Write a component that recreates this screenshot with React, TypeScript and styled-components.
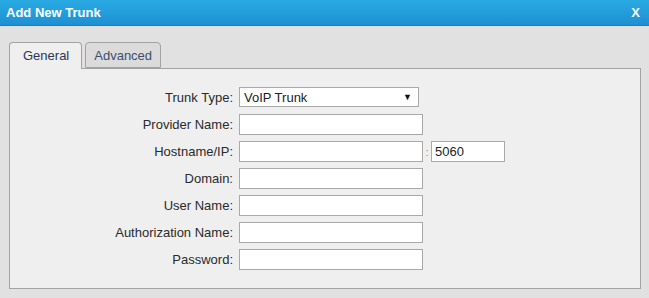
import React from 'react';
import styled, { createGlobalStyle } from 'styled-components';

const GlobalStyle = createGlobalStyle`
  html, body {
    margin: 0;
    padding: 0;
    background: #e1e1e1;
    font-family: Arial, 'Liberation Sans', sans-serif;
  }
`;

const Dialog = styled.div`
  width: 649px;
  height: 298px;
  background: #e1e1e1;
  display: flex;
  flex-direction: column;
  overflow: hidden;
`;

const TitleBar = styled.div`
  height: 25px;
  flex: 0 0 auto;
  display: flex;
  align-items: center;
  justify-content: space-between;
  padding: 0 9px 0 6px;
  background: linear-gradient(#2aaae3, #1d90d3);
  border-bottom: 1px solid #1b7fbd;
  color: #fff;
  font-weight: bold;
  font-size: 13px;
`;

const Close = styled.span`
  font-size: 13px;
  font-weight: bold;
  cursor: pointer;
`;

const Body = styled.div`
  padding: 16px 8px 9px 9px;
  display: flex;
  flex-direction: column;
`;

const TabList = styled.div`
  display: flex;
  gap: 3px;
  height: 26px;
  position: relative;
  z-index: 1;
`;

const Tab = styled.div<{ $active?: boolean }>`
  box-sizing: border-box;
  height: ${(p) => (p.$active ? '27px' : '26px')};
  padding: ${(p) => (p.$active ? '0 12px 1px 13px' : '0 8px 0 8px')};
  display: flex;
  align-items: center;
  font-size: 13px;
  border: 1px solid #a3a3a3;
  border-bottom: ${(p) => (p.$active ? 'none' : '1px solid #a3a3a3')};
  border-radius: 4px 4px 0 0;
  background: ${(p) => (p.$active ? '#efefef' : '#dbdbdb')};
  color: ${(p) => (p.$active ? '#2b3658' : '#3e4c6e')};
`;

const Panel = styled.div`
  box-sizing: border-box;
  height: 221px;
  border: 1px solid #a3a3a3;
  background: #efefef;
  padding-top: 18px;
`;

const Form = styled.div`
  display: grid;
  grid-template-columns: 223px auto;
  column-gap: 6px;
  row-gap: 6px;
  align-items: center;
`;

const Label = styled.label`
  text-align: right;
  font-size: 13px;
  color: #2a2a2a;
`;

const Field = styled.div`
  display: flex;
  align-items: center;
`;

const Input = styled.input<{ $w?: number }>`
  box-sizing: border-box;
  width: ${(p) => p.$w ?? 184}px;
  height: 21px;
  border: 1px solid #a9a9a9;
  background: #fff;
  padding: 0 3px;
  font-family: Arial, 'Liberation Sans', sans-serif;
  font-size: 13px;
  color: #222;
  outline: none;
`;

const Select = styled.div`
  box-sizing: border-box;
  width: 180px;
  height: 20px;
  border: 1px solid #a9a9a9;
  background: #fff;
  display: flex;
  align-items: center;
  justify-content: space-between;
  padding: 0 6px 0 4px;
  font-size: 13px;
  color: #222;
  margin-bottom: 1px;
`;

const Arrow = styled.span`
  font-size: 9px;
  color: #111;
`;

const Colon = styled.span`
  font-size: 11px;
  color: #888;
  width: 8px;
  text-align: center;
`;

const fields = ['Provider Name:', 'Hostname/IP:', 'Domain:', 'User Name:', 'Authorization Name:', 'Password:'];

export default function App() {
  return (
    <Dialog>
      <GlobalStyle />
      <TitleBar>
        <span>Add New Trunk</span>
        <Close>X</Close>
      </TitleBar>
      <Body>
        <TabList>
          <Tab $active>General</Tab>
          <Tab>Advanced</Tab>
        </TabList>
        <Panel>
          <Form>
            <Label>Trunk Type:</Label>
            <Field>
              <Select>
                <span>VoIP Trunk</span>
                <Arrow>▼</Arrow>
              </Select>
            </Field>
            {fields.map((f) => (
              <React.Fragment key={f}>
                <Label>{f}</Label>
                <Field>
                  <Input type={f === 'Password:' ? 'password' : 'text'} />
                  {f === 'Hostname/IP:' && (
                    <>
                      <Colon>:</Colon>
                      <Input $w={74} defaultValue="5060" />
                    </>
                  )}
                </Field>
              </React.Fragment>
            ))}
          </Form>
        </Panel>
      </Body>
    </Dialog>
  );
}
